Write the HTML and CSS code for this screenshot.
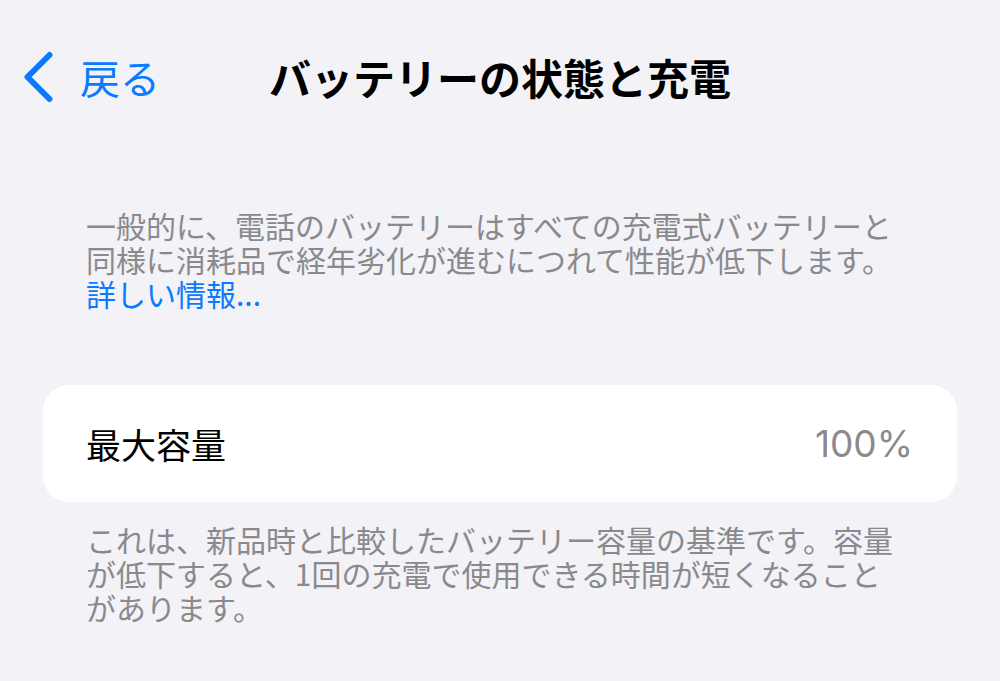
FILE: index.html
```html
<!DOCTYPE html>
<html lang="ja">
<head>
    <meta charset="UTF-8">
    <meta name="viewport" content="width=device-width, initial-scale=1.0">
    <title>バッテリーの状態と充電</title>
    <link rel="stylesheet" href="styles.css">
</head>
<body>
    <header class="nav">
        <a class="back" href="#">
            <svg class="chevron" width="32" height="52" viewBox="0 0 32 52" aria-hidden="true">
                <path d="M27.5 4 L5.5 26 L27.5 48" />
            </svg>
            <span>戻る</span>
        </a>
        <h1 class="title">バッテリーの状態と充電</h1>
    </header>
    <main class="content">
        <p class="footer-note">
            一般的に、電話のバッテリーはすべての充電式バッテリーと同様に消耗品で経年劣化が進むにつれて性能が低下します。
            <a class="more" href="#">詳しい情報...</a>
        </p>
        <section class="group">
            <div class="row">
                <span class="label">最大容量</span>
                <span class="value">100%</span>
            </div>
        </section>
        <p class="footer-note below">これは、新品時と比較したバッテリー容量の基準です。容量が低下すると、1回の充電で使用できる時間が短くなることがあります。</p>
    </main>
</body>
</html>
```

FILE: styles.css
```css
:root {
    --bg: #f2f2f7;
    --card: #fff;
    --text: #000;
    --secondary: #8a8a8e;
    --blue: #0a7aff;
}
body {
    font-family: "Noto Sans CJK JP", sans-serif;
    margin: 0;
    background-color: var(--bg);
    color: var(--text);
}
.nav {
    display: grid;
    grid-template-columns: 1fr auto 1fr;
    align-items: center;
    height: 60px;
    padding-top: 47px;
}
.back {
    display: flex;
    align-items: center;
    gap: 26px;
    padding-left: 22px;
    color: var(--blue);
    text-decoration: none;
    font-size: 40px;
    line-height: 52px;
}
.chevron path {
    fill: none;
    stroke: var(--blue);
    stroke-width: 6;
    stroke-linecap: round;
    stroke-linejoin: round;
}
.title {
    margin: 0;
    font-size: 42px;
    font-weight: 700;
    line-height: 60px;
    white-space: nowrap;
}
.content {
    padding: 101px 43px 0;
}
.footer-note {
    margin: 0;
    max-width: 815px;
    padding-left: 43px;
    font-size: 30px;
    line-height: 34px;
    color: var(--secondary);
}
.footer-note.below {
    margin-top: 20px;
}
.more {
    display: block;
    color: var(--blue);
    text-decoration: none;
}
.group {
    margin-top: 75px;
    background-color: var(--card);
    border-radius: 26px;
}
.row {
    display: flex;
    justify-content: space-between;
    align-items: center;
    height: 117px;
    padding: 0 44px 0 43px;
}
.label {
    font-size: 35px;
}
.value {
    font-family: Inter, "Noto Sans CJK JP", sans-serif;
    font-size: 37px;
    color: var(--secondary);
}
```
